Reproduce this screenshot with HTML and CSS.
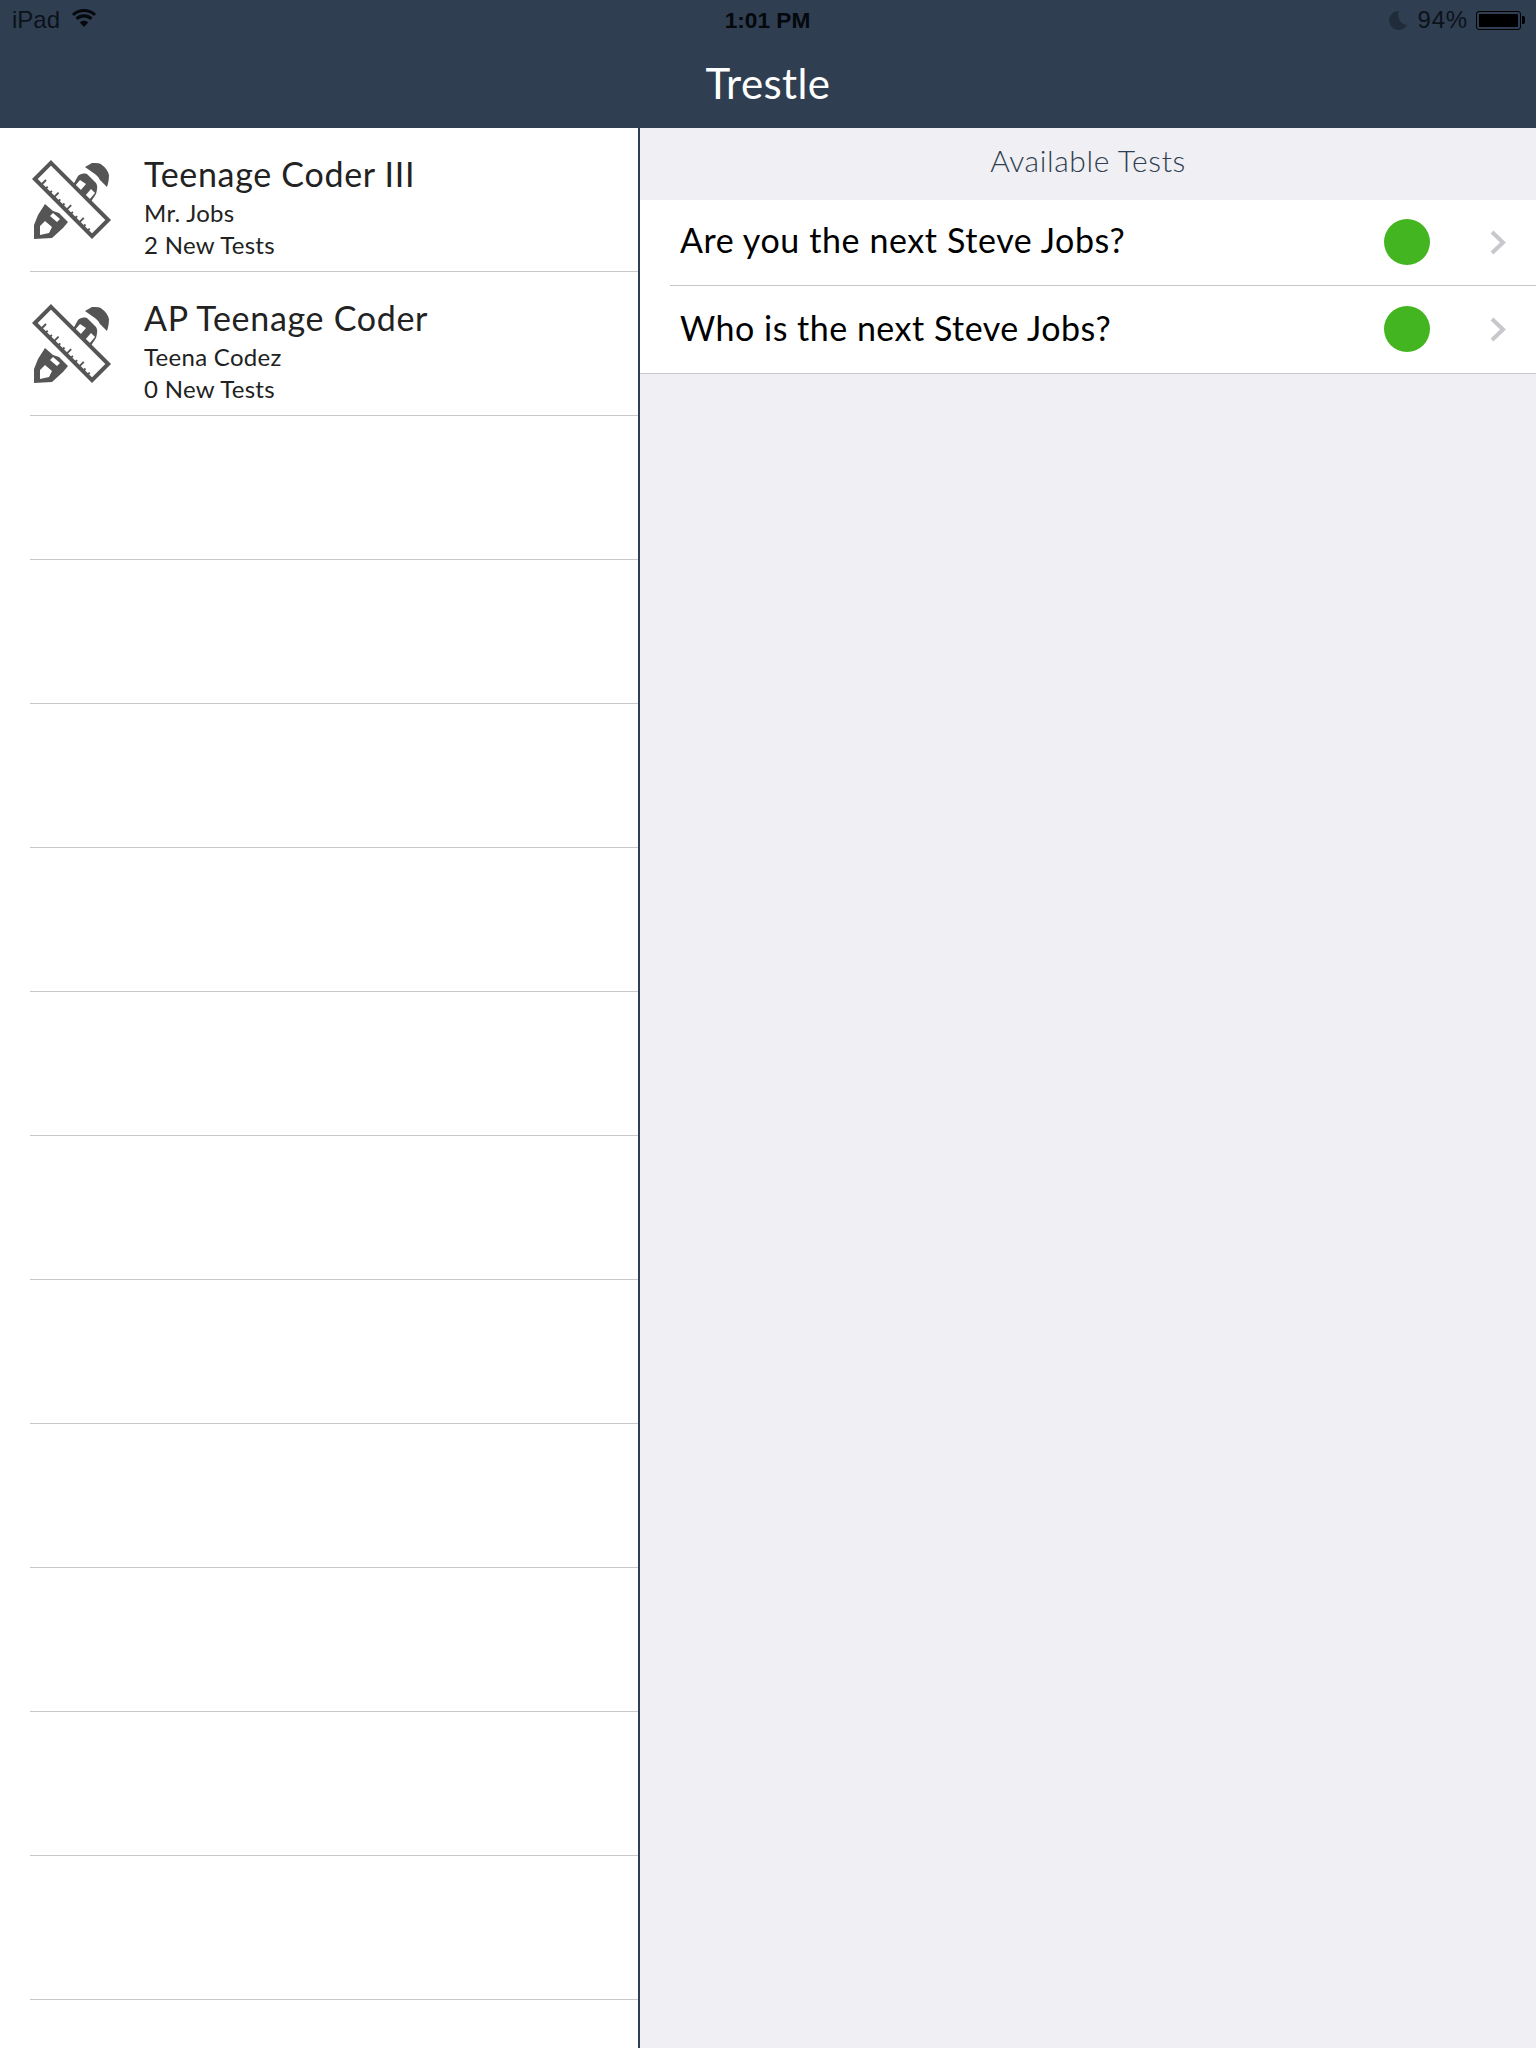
FILE: index.html
```html
<!DOCTYPE html>
<html lang="en">
<head>
  <meta charset="UTF-8">
  <title>Trestle</title>
  <link rel="stylesheet" href="styles.css">
</head>
<body>
  <svg class="defs" width="0" height="0">
    <symbol id="tools" viewBox="0 0 80 80">
      <!-- pencil cap -->
      <path fill="#555" d="M53 7 L60 3 C65 3 68 3 70 5 C74 8 76 11 77 15 C77 20 76 24 75 27 L68 20 C66 16 63 14 60 12 Z"/>
      <!-- pencil body above the ruler -->
      <path fill="#555" d="M41 25 L46 16 C48 14 53 12 56 15 L64 23 C66 26 65 30 64 34 L58 43 Z"/>
      <path fill="#fff" d="M42 27 L48 20 L54 24 L48 31 Z M59 29 L63 33 L57 40 L53 36 Z"/>
      <!-- pencil tip below the ruler -->
      <path fill="#555" fill-rule="evenodd" d="M13 44 L21 51 L27 53 L36 62 L31 68 L20 78 L2 79 L2 65 L6 55 Z M8 66 L13 61 L20 67 L17 73 L8 75 Z M21 53 L28 59 L25 62 L18 56 Z"/>
      <!-- ruler -->
      <polygon fill="#fff" stroke="#555" stroke-width="4" points="19,2.8 76.2,60 60,76.2 2.8,19"/>
      <path fill="none" stroke="#555" stroke-width="1.9" d="M8 26l6-6M12.2 30.2l3.5-3.5M16.4 34.4l3.5-3.5M20.6 38.6l6-6M24.8 42.8l3.5-3.5M29 47l3.5-3.5M33.2 51.2l6-6M37.4 55.4l3.5-3.5M41.6 59.6l3.5-3.5M45.8 63.8l6-6M50 68l3.5-3.5M54.2 72.2l3.5-3.5"/>
    </symbol>
  </svg>

  <header class="topbar">
    <div class="status">
      <div class="status-left">
        <span>iPad</span>
        <svg class="wifi" viewBox="0 0 24 18"><path d="M12 18 L7.8 13.4 C10.2 11.2 13.8 11.2 16.2 13.4 Z M5.6 11 L3.4 8.6 C8.2 4 15.8 4 20.6 8.6 L18.4 11 C14.8 7.6 9.2 7.6 5.6 11 Z M1.9 7 L0 4.8 C6.8 -1.6 17.2 -1.6 24 4.8 L22.1 7 C16.4 1.8 7.6 1.8 1.9 7 Z"/></svg>
      </div>
      <div class="status-time">1:01 PM</div>
      <div class="status-right">
        <svg class="moon" viewBox="0 0 20 20"><path d="M11 1 A9.5 9.5 0 1 0 19 15 A10 10 0 0 1 11 1 Z"/></svg>
        <span class="percent">94%</span>
        <div class="battery"><div class="battery-fill"></div></div>
      </div>
    </div>
    <h1>Trestle</h1>
  </header>

  <main class="split">
    <ul class="courses">
      <li class="course">
        <svg class="course-icon"><use href="#tools"/></svg>
        <div>
          <div class="course-name">Teenage Coder III</div>
          <div class="course-line">Mr. Jobs</div>
          <div class="course-line">2 New Tests</div>
        </div>
      </li>
      <li class="course">
        <svg class="course-icon"><use href="#tools"/></svg>
        <div>
          <div class="course-name">AP Teenage Coder</div>
          <div class="course-line">Teena Codez</div>
          <div class="course-line">0 New Tests</div>
        </div>
      </li>
      <li class="course"></li>
      <li class="course"></li>
      <li class="course"></li>
      <li class="course"></li>
      <li class="course"></li>
      <li class="course"></li>
      <li class="course"></li>
      <li class="course"></li>
      <li class="course"></li>
      <li class="course"></li>
      <li class="course"></li>
      <li class="course"></li>
    </ul>

    <section class="tests">
      <h2>Available Tests</h2>
      <ul class="test-list">
        <li class="test">
          <span class="test-name">Are you the next Steve Jobs?</span>
          <span class="dot"></span>
          <svg class="chevron" viewBox="0 0 16 25"><path d="M2 2 L13 12.5 L2 23"/></svg>
        </li>
        <li class="test">
          <span class="test-name">Who is the next Steve Jobs?</span>
          <span class="dot"></span>
          <svg class="chevron" viewBox="0 0 16 25"><path d="M2 2 L13 12.5 L2 23"/></svg>
        </li>
      </ul>
    </section>
  </main>
</body>
</html>
```

FILE: styles.css
```css
* {
  box-sizing: border-box;
}
html, body {
  margin: 0;
  height: 2048px;
  overflow: hidden;
}
body {
  font-family: 'Lato', sans-serif;
  background: #fff;
}
.defs {
  position: absolute;
}
.topbar {
  height: 128px;
  background: #2f3e50;
}
.status {
  height: 40px;
  padding: 0 11px 0 12px;
  display: grid;
  grid-template-columns: 1fr auto 1fr;
  align-items: center;
  font-family: 'Liberation Sans', sans-serif;
  font-size: 24px;
  color: #0c121a;
}
.status-left {
  display: flex;
  align-items: center;
  gap: 12px;
}
.wifi {
  width: 24px;
  height: 18px;
  margin-top: -4px;
  fill: #05080c;
}
.status-time {
  font-weight: bold;
  font-size: 22.7px;
  margin-left: -2px;
  color: #05080c;
}
.status-right {
  display: flex;
  justify-content: flex-end;
  align-items: center;
}
.moon {
  width: 20px;
  height: 20px;
  margin-right: 10px;
  fill: #202c3a;
}
.percent {
  letter-spacing: 0.8px;
}
.battery {
  position: relative;
  width: 45px;
  height: 19px;
  margin-left: 8px;
  margin-right: 4px;
  border: 1px solid #000;
  border-radius: 3px;
  padding: 2px;
}
.battery::after {
  content: "";
  position: absolute;
  right: -5px;
  top: 4px;
  width: 3px;
  height: 8px;
  background: #000;
  border-radius: 0 2px 2px 0;
}
.battery-fill {
  height: 100%;
  background: #000;
  border-radius: 1px;
}
h1 {
  margin: 0;
  text-align: center;
  color: #fff;
  font-size: 42px;
  font-weight: 400;
  letter-spacing: 0.4px;
  line-height: 86px;
}
.split {
  display: grid;
  grid-template-columns: 640px 1fr;
  height: 1920px;
}
.courses {
  list-style: none;
  margin: 0;
  padding: 0 0 0 30px;
  border-right: 2px solid #2f3e50;
  overflow: hidden;
}
.course {
  height: 144px;
  border-bottom: 1px solid #c8c8c8;
  display: flex;
  align-items: flex-start;
  padding-top: 24px;
  gap: 32px;
}
.course-icon {
  width: 80px;
  height: 80px;
  margin: 8px 0 0 2px;
  flex: none;
}
.course-name {
  font-size: 34px;
  letter-spacing: 0.7px;
  line-height: 44px;
  color: #222;
  margin-bottom: 1px;
}
.course-line {
  font-size: 24px;
  letter-spacing: 0.3px;
  line-height: 32px;
  color: #222;
}
.tests {
  background: #efeff4;
}
.tests h2 {
  margin: 0;
  height: 72px;
  line-height: 65px;
  text-align: center;
  font-size: 30px;
  font-weight: 300;
  letter-spacing: 0.6px;
  color: #2f3e50;
}
.test-list {
  list-style: none;
  margin: 0;
  padding: 0;
  background: #fff;
  border-bottom: 1px solid #c8c7cc;
}
.test {
  height: 86px;
  margin-left: 30px;
  padding: 0 30px 0 10px;
  display: flex;
  align-items: center;
  border-bottom: 1px solid #c8c7cc;
}
.test:last-child {
  height: 87px;
  border-bottom: none;
}
.test-name {
  flex: 1;
  font-size: 34px;
  letter-spacing: 0.6px;
  color: #000;
  margin-top: -7px;
}
.test:last-child .test-name {
  margin-top: -4px;
  letter-spacing: 0.5px;
}
.dot {
  width: 46px;
  height: 46px;
  border-radius: 50%;
  background: #43b521;
  margin-top: -1px;
  margin-right: 60px;
}
.chevron {
  width: 16px;
  height: 25px;
  fill: none;
  stroke: #c7c7cc;
  stroke-width: 4;
}
```
